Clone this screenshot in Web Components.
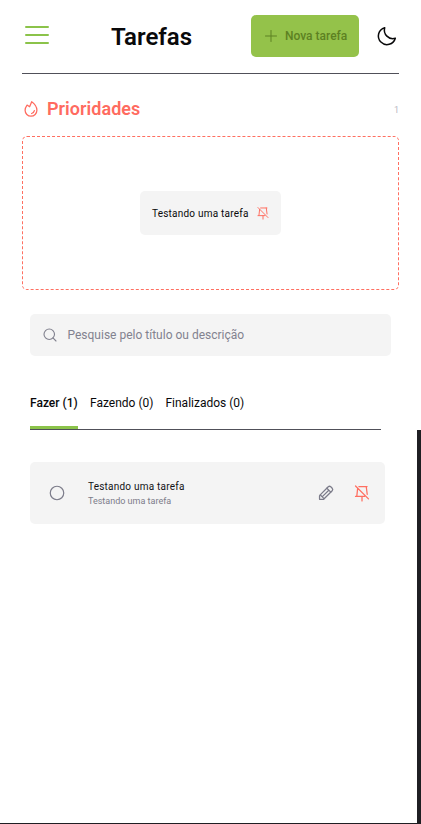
<!DOCTYPE html>
<html lang="pt-BR"><head><meta charset="utf-8"><title>Tarefas</title>
<style>
body{margin:0;background:#fff;font-family:Roboto,"Liberation Sans",sans-serif;color:#09090a}
</style></head><body>
<task-app></task-app>
<script>
const define=(name,html)=>customElements.define(name,class extends HTMLElement{
  constructor(){super();const t=document.createElement('template');t.innerHTML=html;
    this.attachShadow({mode:'open'}).append(t.content.cloneNode(true));}
});
const icons={
  menu:'<path d="M40 64H216M40 128H216M40 192H216"/>',
  plus:'<path d="M40 128H216M128 40V216"/>',
  moon:'<path d="M216.7 152.6A91.9 91.9 0 0 1 103.4 39.3 92 92 0 1 0 216.7 152.6Z"/>',
  flame:'<path d="M108 96 138 24C172 48 212 96 212 146A84 84 0 0 1 44 146C44 118 54 97 72 72Z"/><path d="M136 192C156 188 172 172 176 152"/>',
  search:'<circle cx="116" cy="116" r="84"/><path d="M175.4 175.4 224 224"/>',
  circle:'<circle cx="128" cy="128" r="96"/>',
  pencil:'<path d="M84 220H44a8 8 0 0 1-8-8V172Q36 164 42 158L160 40Q178 24 196 40L216 60Q232 78 216 96L98 214Q92 220 84 220Z"/><path d="M140 60 196 116M168 88 76 180M48 156 100 208"/>',
  unpin:'<path d="M128 176V240M36 28 220 212M84 36H200M188 36 202 146M164 176H36M66 62 54 172"/>'
};
customElements.define('line-icon',class extends HTMLElement{
  connectedCallback(){
    const size=this.getAttribute('size'),weight=this.getAttribute('weight')||16;
    const root=this.shadowRoot||this.attachShadow({mode:'open'});
    root.innerHTML=`<style>:host{display:block;flex:none;width:${size}px;height:${size}px}svg{display:block}</style>
    <svg width="${size}" height="${size}" viewBox="0 0 256 256" fill="none" stroke="currentColor" stroke-width="${weight}" stroke-linecap="round" stroke-linejoin="round">${icons[this.getAttribute('name')]}</svg>`;
  }
});
define('add-button',`<style>:host{display:block}button{display:flex;align-items:center;gap:6px;width:108px;height:42px;box-sizing:border-box;padding:0 0 0 12px;border:0;border-radius:5px;background:#94c24a;color:#5d8122;font:500 12px/18px Roboto,sans-serif;white-space:nowrap}</style><button><line-icon name="plus" size="16"></line-icon><slot></slot></button>`);
define('app-header',`<style>:host{display:flex;align-items:center;box-sizing:border-box;height:73px;padding-bottom:2px;border-bottom:1px solid #505059}
.menu{color:#8bc34a;margin:-2px 0 0 -1px}h1{font-size:24px;line-height:32px;font-weight:600;margin:2px 0 0 58px;width:140px}.moon{margin-left:auto}</style>
<line-icon class="menu" name="menu" size="32"></line-icon><h1><slot></slot></h1><add-button>Nova tarefa</add-button><line-icon class="moon" name="moon" size="24"></line-icon>`);
define('task-chip',`<style>:host{display:flex;align-items:center;gap:6px;width:141px;height:44px;box-sizing:border-box;padding-left:12px;border-radius:5px;background:#f4f4f4;font-size:10px;white-space:nowrap}span{width:98px;letter-spacing:.22px}line-icon{color:#ff6f61}</style><span><slot></slot></span><line-icon name="unpin" size="14" weight="18"></line-icon>`);
define('priority-list',`<style>:host{display:block;margin-top:23px}header{display:flex;align-items:center;height:24px;color:#ff6b5f}h2{font-size:18px;font-weight:600;line-height:24px;letter-spacing:.04px;margin:0 auto 0 7px}small{font-size:9px;color:#b8b8c2;line-height:12px;margin-top:2px}
.box{display:grid;place-items:center;box-sizing:border-box;height:154px;margin-top:15px;border:1px dashed #ff6f61;border-radius:5px}</style>
<header><line-icon name="flame" size="18" weight="18"></line-icon><h2>Prioridades</h2><small>1</small></header><div class="box"><slot></slot></div>`);
define('search-field',`<style>:host{display:flex;align-items:center;gap:9.500px;height:42px;box-sizing:border-box;margin:24px 8px 0;padding-left:12px;border-radius:5px;background:#f4f4f4;color:#82828f;font-size:12px}</style><line-icon name="search" size="16" weight="18"></line-icon><span><slot></slot></span>`);
define('task-tabs',`<style>:host{display:flex;gap:12px;height:47px;box-sizing:border-box;margin:27px 18px 0 8px;border-bottom:1px solid #505059;font-size:12px;line-height:40px;white-space:nowrap}b{font-weight:500;width:48px;box-sizing:border-box;height:46px;border-bottom:3px solid #8bc34a}</style><b>Fazer (1)</b><span>Fazendo (0)</span><span>Finalizados (0)</span>`);
define('task-row',`<style>:host{display:flex;align-items:center;height:62px;box-sizing:border-box;margin:32px 14px 0 8px;padding:0 14px 0 18px;border-radius:5px;background:#f4f4f4;color:#7c7c8a;white-space:nowrap}.text{margin:2px auto 0 22px}.title{font-size:10px;line-height:14px;letter-spacing:.22px;color:#121214}.description{font-size:9px;line-height:14px}.pin{margin-left:18px;color:#ff6f61}</style>
<line-icon name="circle" size="18" weight="17"></line-icon><div class="text"><div class="title"><slot></slot></div><div class="description"><slot name="description"></slot></div></div><line-icon name="pencil" size="18" weight="18"></line-icon><line-icon class="pin" name="unpin" size="18" weight="18"></line-icon>`);
define('task-app',`<style>:host{display:block;height:824px;box-sizing:border-box;padding:1px 22px 0;background:linear-gradient(#1f1f23,#1f1f23) 417px 430px/4px 394px no-repeat,linear-gradient(#1f1f23,#1f1f23) 0 823px/421px 1px no-repeat,#fff}</style>
<app-header>Tarefas</app-header><priority-list><task-chip>Testando uma tarefa</task-chip></priority-list><search-field>Pesquise pelo título ou descrição</search-field><task-tabs></task-tabs><task-row>Testando uma tarefa<span slot="description">Testando uma tarefa</span></task-row>`);
</script></body></html>
